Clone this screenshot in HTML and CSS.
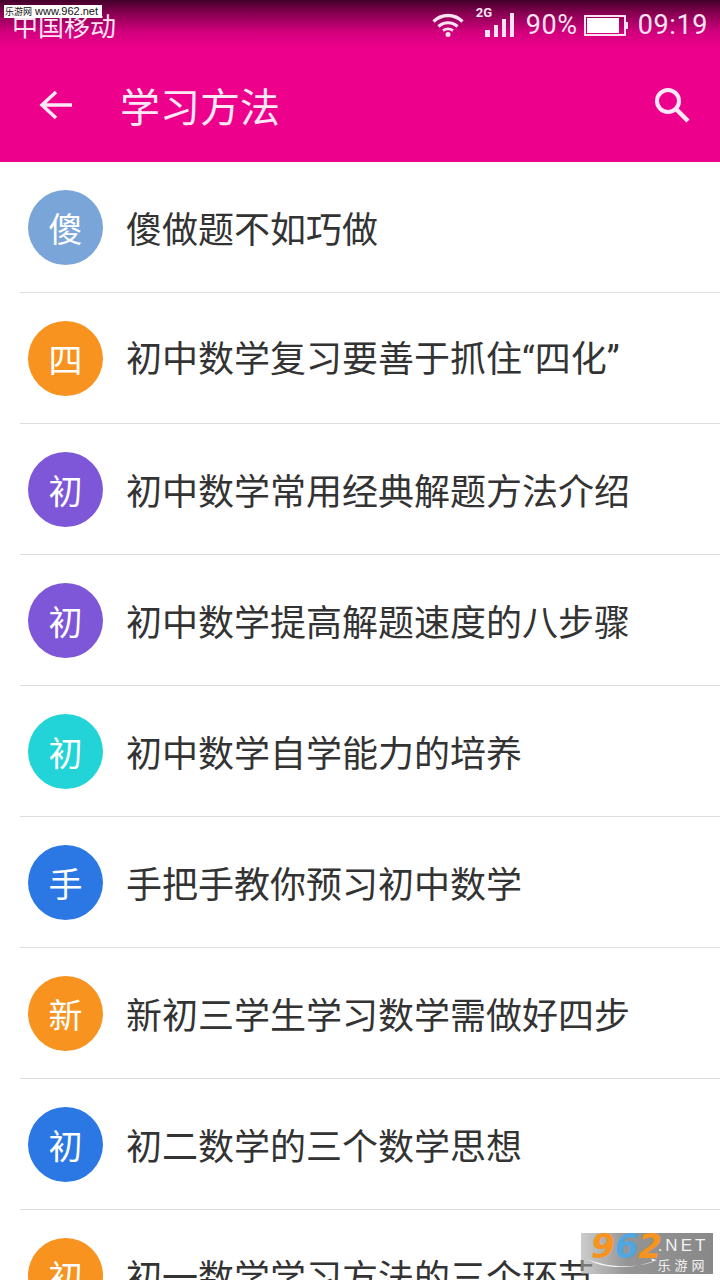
FILE: index.html
```html
<!DOCTYPE html>

<html>
    <head>
        <title>学习方法</title>
        <meta http-equiv="Content-Type" content="text/html; charset=utf-8"/>
        <link rel="stylesheet" href="styles.css">
    </head>
    <body>

    <div id="page">
        <div id="header">
            <div id="statusBar">
                <span class="carrier">中国移动</span>
                <div class="statusIcons">
                    <svg class="wifi" width="32" height="24" viewBox="0 0 32 24">
                        <path d="M1.5 8.5C10 .5 22 .5 30.500 8.500" fill="none" stroke="#FBE3F2" stroke-width="3.4"/>
                        <path d="M6.500 13.500C12 8.500 20 8.500 25.500 13.500" fill="none" stroke="#FBE3F2" stroke-width="3.2"/>
                        <path d="M11 17.500C14 15.500 18 15.500 21 17.500" fill="none" stroke="#FBE3F2" stroke-width="2.800"/>
                        <circle cx="16" cy="21.500" r="2.500" fill="#FBE3F2"/>
                    </svg>
                    <div class="signal">
                        <span class="netType">2G</span>
                        <svg width="29" height="24" viewBox="0 0 29 24">
                            <rect x="0" y="17" width="5" height="7" fill="#FBE3F2"/>
                            <rect x="9" y="12" width="4" height="12" fill="#FBE3F2"/>
                            <rect x="17" y="6" width="4" height="18" fill="#FBE3F2"/>
                            <rect x="25" y="0" width="4" height="24" fill="#FBE3F2"/>
                        </svg>
                    </div>
                    <span class="statusText battPct">90%</span>
                    <div class="battery"><div class="batteryFill"></div></div>
                    <span class="statusText">09:19</span>
                </div>
            </div>
            <div id="toolbar">
                <svg class="backIcon" width="36" height="36" viewBox="0 0 36 36">
                    <path d="M34 18H4M18 5L4 18L18 31" fill="none" stroke="#FDE8F5" stroke-width="3.5"/>
                </svg>
                <span class="title">学习方法</span>
                <svg class="searchIcon" width="38" height="38" viewBox="0 0 38 38">
                    <circle cx="15" cy="15" r="11" fill="none" stroke="#FDE8F5" stroke-width="4"/>
                    <path d="M23 23L35 35" fill="none" stroke="#FDE8F5" stroke-width="4.500"/>
                </svg>
            </div>
        </div>

        <ul id="list">
            <li class="row"><span class="badge softBlue">傻</span><span class="label">傻做题不如巧做</span></li>
            <li class="row"><span class="badge orange">四</span><span class="label">初中数学复习要善于抓住<span class="quote">“</span>四化<span class="quote">”</span></span></li>
            <li class="row"><span class="badge purple">初</span><span class="label">初中数学常用经典解题方法介绍</span></li>
            <li class="row"><span class="badge purple">初</span><span class="label">初中数学提高解题速度的八步骤</span></li>
            <li class="row"><span class="badge teal">初</span><span class="label">初中数学自学能力的培养</span></li>
            <li class="row"><span class="badge blue">手</span><span class="label">手把手教你预习初中数学</span></li>
            <li class="row"><span class="badge orange">新</span><span class="label">新初三学生学习数学需做好四步</span></li>
            <li class="row"><span class="badge blue">初</span><span class="label">初二数学的三个数学思想</span></li>
            <li class="row"><span class="badge orange">初</span><span class="label">初一数学学习方法的三个环节</span></li>
        </ul>

        <div id="topMark"><span class="topMarkCn">乐游网</span><span class="topMarkUrl">www.962.net</span></div>
        <div id="cornerMark">
            <svg class="swoosh" width="72" height="14" viewBox="0 0 72 14">
                <path d="M0 1C14 10 40 13 70 2L64 0.500L66 4C44 11 20 9 0 1Z" fill="#F4F4F4"/>
            </svg>
            <span class="markNum"><i class="n9">9</i><i class="n6">6</i><i class="n2">2</i></span>
            <div class="markSide">
                <span class="markNet">.NET</span>
                <span class="markCn">乐游网</span>
            </div>
        </div>
    </div>

    </body>
</html>
```

FILE: styles.css
```css
html, body {
    margin: 0;
    padding: 0;
}

body {
    font-family: "Noto Sans CJK SC", "Noto Sans", sans-serif;
    background-color: white;
}

#page {
    position: relative;
    width: 720px;
    height: 1280px;
    overflow: hidden;
}

/**** HEADER ****/

#header {
    height: 162px;
    background-color: #EC008C;
    background-image: linear-gradient(to bottom, #43002A 0, #8A0052 14px, #D2007D 32px, #EC008C 48px);
    color: #FDE8F5;
}

#statusBar {
    height: 50px;
    display: flex;
    justify-content: space-between;
    align-items: center;
    padding: 0 12px 0 12px;
}

.carrier {
    font-size: 26px;
    line-height: 30px;
    color: #FBE3F2;
}

.statusIcons {
    display: flex;
    align-items: center;
}

.wifi {
    margin-right: 21px;
}

.signal {
    position: relative;
    width: 29px;
    height: 24px;
    margin-right: 12px;
}

.signal svg {
    display: block;
}

.netType {
    position: absolute;
    left: -9px;
    top: -7px;
    font-family: "Roboto", sans-serif;
    font-size: 13px;
    line-height: 14px;
    font-weight: bold;
    color: #FBE3F2;
}

.statusText {
    font-family: "Roboto", sans-serif;
    font-size: 27px;
    line-height: 32px;
    letter-spacing: 0.6px;
    color: #FBE3F2;
}

.battPct {
    margin-right: 6px;
}

.battery {
    position: relative;
    width: 38px;
    height: 17px;
    border: 2px solid #FBE3F2;
    padding: 0;
    margin-right: 12px;
}

.battery:after {
    content: "";
    position: absolute;
    right: -4px;
    top: 5px;
    width: 2px;
    height: 7px;
    background-color: #FBE3F2;
}

.batteryFill {
    width: 32px;
    height: 15px;
    margin: 1px 0 0 1px;
    background-color: white;
}

#toolbar {
    height: 112px;
    display: flex;
    align-items: center;
    padding: 0 29px 0 38px;
}

.backIcon {
    flex-shrink: 0;
    margin-top: -2px;
}

.title {
    font-size: 40px;
    line-height: 50px;
    margin-left: 46px;
    margin-top: -3px;
    flex-grow: 1;
}

.searchIcon {
    flex-shrink: 0;
    margin-top: -2px;
}

/**** LIST ****/

#list {
    list-style-type: none;
    margin: 0;
    padding: 0 0 0 20px;
}

.row {
    height: 130px;
    display: flex;
    align-items: center;
    border-bottom: 1px solid #DDD;
    padding-left: 8px;
}

.badge {
    flex-shrink: 0;
    width: 75px;
    height: 75px;
    border-radius: 50%;
    display: flex;
    align-items: center;
    justify-content: center;
    color: #FFF;
    font-size: 34px;
    margin-top: 1px;
}

.softBlue { background-color: #7AA5D8; }
.orange { background-color: #F7931E; }
.purple { background-color: #7E57D8; }
.teal { background-color: #22D3D8; }
.blue { background-color: #2B78E4; }

.label {
    margin-left: 23px;
    font-size: 36px;
    line-height: 44px;
    color: #333;
    white-space: nowrap;
}

.quote {
    font-family: "Roboto", sans-serif;
}

/**** WATERMARKS ****/

#topMark {
    position: absolute;
    left: 4px;
    top: 5px;
    width: 98px;
    height: 13px;
    display: flex;
    align-items: center;
    background-color: white;
    color: #111;
    padding-left: 1px;
    box-sizing: border-box;
    white-space: nowrap;
    overflow: hidden;
}

.topMarkCn {
    font-size: 9px;
    line-height: 13px;
}

.topMarkUrl {
    font-family: "Liberation Sans", sans-serif;
    font-size: 11px;
    line-height: 13px;
    margin-left: 3px;
}

#cornerMark {
    position: absolute;
    left: 581px;
    top: 1233px;
    width: 132px;
    height: 41px;
    background-image: linear-gradient(to right, rgba(170,170,170,0.6), rgba(130,130,130,0.85) 35%, rgba(130,130,130,0.95));
    display: flex;
}

.swoosh {
    position: absolute;
    left: 6px;
    top: 25px;
}

.markNum {
    font-family: "DejaVu Sans", sans-serif;
    font-size: 34px;
    line-height: 26px;
    font-weight: bold;
    margin-left: 10px;
    white-space: nowrap;
}

.markNum i {
    font-style: italic;
}

.n9, .n2 { color: #F7941D; }
.n6 { color: #4FA6E0; }

.markSide {
    display: flex;
    flex-direction: column;
    align-items: center;
    width: 52px;
    margin-left: -5px;
}

.markNet {
    font-family: "Liberation Sans", sans-serif;
    font-size: 17px;
    line-height: 20px;
    letter-spacing: 3px;
    color: #F2F2F2;
    margin-top: 3px;
}

.markCn {
    font-size: 13px;
    line-height: 16px;
    letter-spacing: 4px;
    color: #F2F2F2;
    margin-top: 1px;
}
```
